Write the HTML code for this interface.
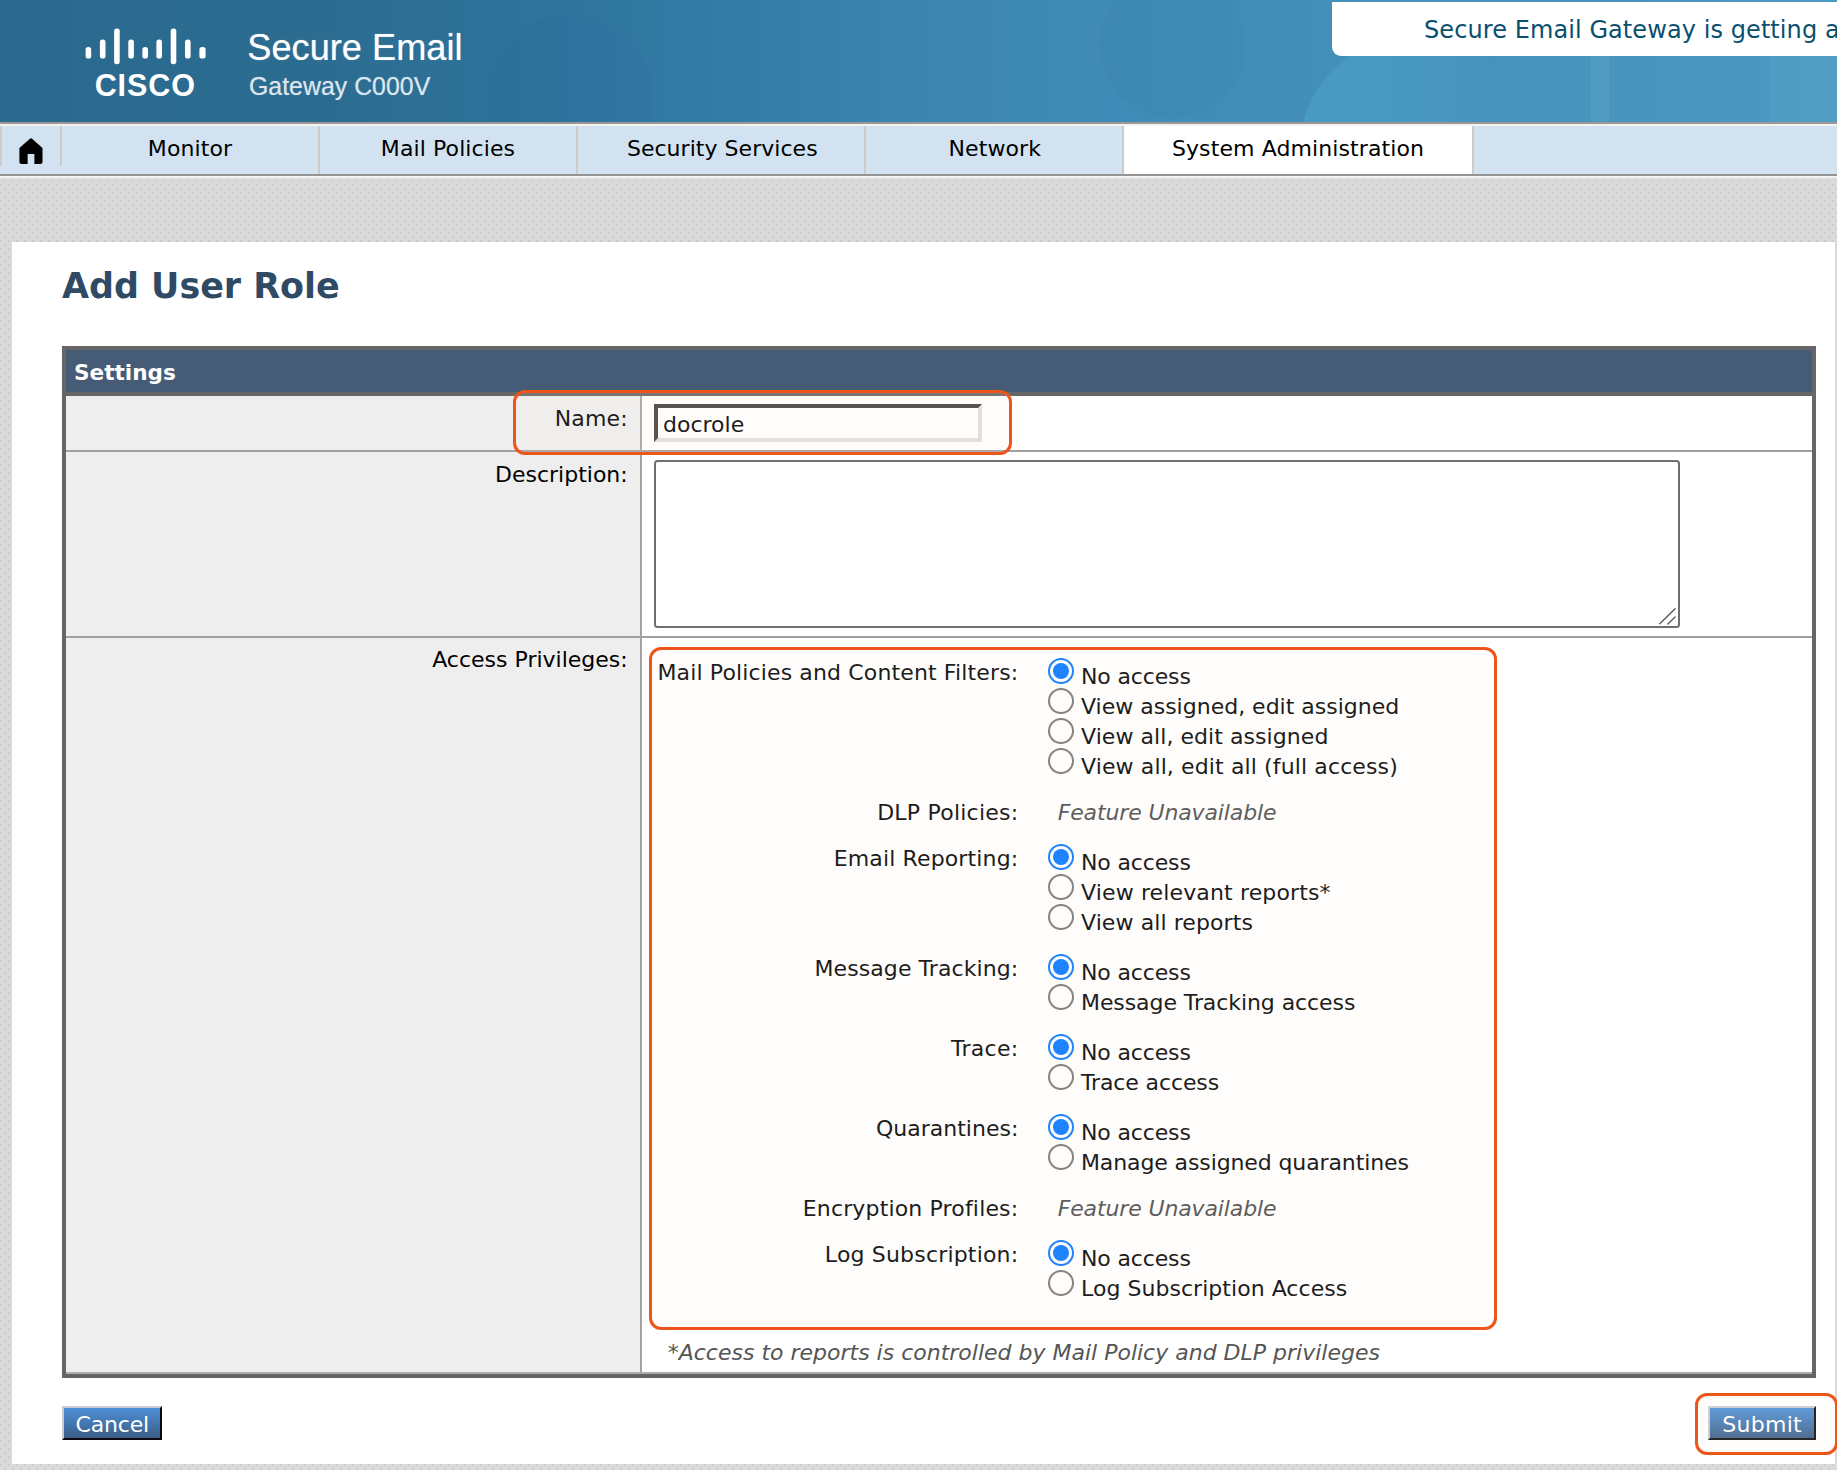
<!DOCTYPE html>
<html lang="en">
<head>
<meta charset="utf-8">
<title>Add User Role</title>
<style>
html,body{margin:0;padding:0;}
body{
  width:1837px;height:1470px;overflow:hidden;position:relative;
  font-family:"DejaVu Sans","Liberation Sans",sans-serif;font-size:22px;color:#000;
  background-color:#dadada;
  background-image:
    radial-gradient(circle at 1px 1px,#cdcdcd 0,#cdcdcd 0.9px,rgba(205,205,205,0) 1.5px),
    radial-gradient(circle at 1px 1px,#cdcdcd 0,#cdcdcd 0.9px,rgba(205,205,205,0) 1.5px);
  background-size:8px 8px,8px 8px;
  background-position:4px 4px,0px 0px;
}
.abs{position:absolute;}
/* ---------- header ---------- */
#hdr{left:0;top:0;width:1837px;height:122px;overflow:hidden;
  background:linear-gradient(90deg,#2b6a8e 0px,#2c6c91 330px,#2f769f 600px,#3b84b0 900px,#418db9 1200px,#4693bd 1500px,#4a99c2 1837px);}
#hdr .c1{left:487px;top:15px;width:166px;height:166px;border-radius:50%;background:rgba(20,80,170,0.035);}
#hdr .c2{left:1100px;top:-28px;width:146px;height:146px;border-radius:50%;background:rgba(0,40,100,0.022);}
#hdr .c3{left:1300px;top:37px;width:226px;height:226px;border-radius:50%;background:linear-gradient(90deg,rgba(100,210,245,0.17) 0%,rgba(100,210,245,0.10) 45%,rgba(100,210,245,0) 100%);}
#hdr .c4{left:1591px;top:56px;width:18px;height:66px;background:rgba(255,255,255,0.06);}
#hdr .c5{left:1769px;top:56px;width:68px;height:66px;background:rgba(255,255,255,0.045);}
#hdrline{left:0;top:122px;width:1837px;height:2px;background:#9a9896;}
#hdrline2{left:0;top:124px;width:1837px;height:2px;background:#f4f3f2;}
#logo{left:83.9px;top:26.7px;width:126px;height:40px;}
#cisco{left:94.3px;top:64.5px;width:102px;text-align:center;font-family:"Liberation Sans","DejaVu Sans",sans-serif;font-weight:bold;font-size:30.5px;line-height:40px;letter-spacing:0.95px;transform:scaleY(1.04);transform-origin:50% 78%;color:#fff;white-space:nowrap;}
#prod1{left:247.3px;top:25.4px;font-family:"Liberation Sans","DejaVu Sans",sans-serif;font-size:36.2px;line-height:46px;color:#fff;white-space:nowrap;text-shadow:0 0 1px rgba(255,255,255,0.55);}
#prod2{left:249px;top:70px;font-family:"Liberation Sans","DejaVu Sans",sans-serif;font-size:24.9px;line-height:32px;color:#dbe6ee;white-space:nowrap;text-shadow:0 0 1px rgba(225,235,242,0.5);}
#banner{left:1332px;top:2px;width:520px;height:54px;background:#fff;border-radius:0 0 0 9px;}
#banner span{position:absolute;left:92px;top:13px;letter-spacing:0.08px;font-size:24px;line-height:30px;color:#0b4f6f;white-space:nowrap;}
/* ---------- nav ---------- */
#nav{left:0;top:126px;width:1837px;height:48px;background:#d2e2f0;}
#navline{left:0;top:174px;width:1837px;height:2px;background:#949494;}
#navline2{left:0;top:176px;width:1837px;height:2px;background:#f3f3f3;}
.tab{position:absolute;top:0;height:48px;line-height:45px;text-align:center;font-size:22px;letter-spacing:0.1px;color:#000;border-left:2px solid #cbcbcb;box-sizing:border-box;white-space:nowrap;}
.tab.on{background:#fff;border-right:2px solid #cbcbcb;}
#homeL{left:0;top:126px;width:2px;height:40px;background:#cccccc;}
#homeR{left:60px;top:126px;width:2px;height:40px;background:#cbcbcb;}
/* ---------- page ---------- */
#page{left:12px;top:242px;width:1823px;height:1222px;background:#fff;}
#title{left:62px;top:263px;font-weight:bold;font-size:34.9px;line-height:46px;color:#2f4a65;white-space:nowrap;}
#tbl{left:62px;top:346px;width:1754px;height:1032px;box-sizing:border-box;border:4px solid #666;background:#fff;}
#th{left:0;top:0;width:1746px;height:42px;background:#465b75;border-bottom:4px solid #666;}
#th span{position:absolute;left:8px;top:10px;font-weight:bold;font-size:21.6px;line-height:26px;color:#fff;}
.lab{position:absolute;left:0;width:574px;background:#eee;border-right:2px solid #a3a3a3;}
.lab span{position:absolute;right:12.3px;white-space:nowrap;line-height:26px;}
.hl{position:absolute;left:0;width:1746px;height:2px;background:#a0a0a0;}
#inp{left:654px;top:404px;width:328px;height:38px;box-sizing:border-box;background:#fff;border-style:solid;border-width:4px;border-color:#403f3c #dedddb #dedddb #403f3c;}
#inp span{position:absolute;left:5px;top:4px;line-height:26px;white-space:nowrap;}
#ta{left:654px;top:460px;width:1026px;height:168px;box-sizing:border-box;background:#fff;border:2px solid #6f6f6f;border-radius:3.5px;}
.ob{position:absolute;box-sizing:border-box;border:3.3px solid #ee551a;border-radius:12px;background:rgba(250,238,230,0.12);}
/* privileges */
.pl{position:absolute;right:818.7px;white-space:nowrap;line-height:26px;}
.pr{position:absolute;left:1081px;white-space:nowrap;line-height:26px;}
.fu{position:absolute;left:1057.7px;white-space:nowrap;line-height:26px;font-style:italic;color:#4a4a4a;letter-spacing:-0.13px;}
.rd{position:absolute;left:1048px;width:26px;height:26px;margin-top:-1px;box-sizing:border-box;border-radius:50%;border:2px solid #767676;background:#fff;}
.rd.on{border-color:#0075ff;}
.rd.on:after{content:"";position:absolute;left:3px;top:3px;width:16px;height:16px;border-radius:50%;background:#0075ff;}
#note{left:667.7px;top:1340px;font-style:italic;color:#555;white-space:nowrap;line-height:26px;}
.btn{position:absolute;top:1406px;height:34px;box-sizing:border-box;border-style:solid;border-width:2px;border-color:#c9cad3 #0a0a10 #0a0a10 #c9cad3;color:#fff;font-size:22px;line-height:34px;text-align:center;white-space:nowrap;}
#cancel{left:62px;width:100px;letter-spacing:-0.2px;text-indent:0.5px;background:linear-gradient(180deg,#4e8fd6 0%,#4377b0 50%,#3b5d86 100%);}
#submit{left:1708px;width:108px;letter-spacing:0.28px;text-indent:0.3px;background:linear-gradient(180deg,#4e8fd6 0%,#4377b0 50%,#3b5d86 100%);}
</style>
</head>
<body>
<!-- header -->
<div id="hdr" class="abs">
  <div class="abs c1"></div><div class="abs c2"></div><div class="abs c3"></div><div class="abs c4"></div><div class="abs c5"></div>
</div>
<div id="hdrline" class="abs"></div><div id="hdrline2" class="abs"></div>
<svg id="logo" class="abs" viewBox="0 0 126 40">
  <g fill="#fff">
    <rect x="1.6" y="20" width="5.6" height="11.6" rx="2.6"/>
    <rect x="15.9" y="12.6" width="5.6" height="19" rx="2.6"/>
    <rect x="30.1" y="1.6" width="5.6" height="35.6" rx="2.6"/>
    <rect x="44.3" y="12.6" width="5.6" height="19" rx="2.6"/>
    <rect x="58.4" y="20" width="5.6" height="11.6" rx="2.6"/>
    <rect x="72.4" y="12.6" width="5.6" height="19" rx="2.6"/>
    <rect x="86.7" y="1.6" width="5.6" height="35.6" rx="2.6"/>
    <rect x="101" y="12.6" width="5.6" height="19" rx="2.6"/>
    <rect x="115.4" y="20" width="6.2" height="11.6" rx="2.6"/>
  </g>
</svg>
<div id="cisco" class="abs">CISCO</div>
<div id="prod1" class="abs">Secure Email</div>
<div id="prod2" class="abs">Gateway C000V</div>
<div id="banner" class="abs"><span>Secure Email Gateway is getting a new look</span></div>

<!-- nav -->
<div id="nav" class="abs">
  <div class="tab" style="left:62px;width:256px;border-left:none;">Monitor</div>
  <div class="tab" style="left:318px;width:258px;">Mail Policies</div>
  <div class="tab" style="left:576px;width:288px;letter-spacing:0.04px;padding-left:2.6px;">Security Services</div>
  <div class="tab" style="left:864px;width:258px;padding-left:1.6px;">Network</div>
  <div class="tab on" style="left:1122px;width:352px;">System Administration</div>
</div>
<div id="homeL" class="abs"></div><div id="homeR" class="abs"></div>
<svg class="abs" style="left:18px;top:137px;width:26px;height:28px" viewBox="0 0 26 28">
  <path d="M11.9 1.7 Q13 0.6 14.1 1.7 L24.5 11.1 L24.5 25 Q24.5 27 22.5 27 L16.4 27 L16.4 16.9 L9.65 16.9 L9.65 27 L3.4 27 Q1.4 27 1.4 25 L1.4 11.1 Z" fill="#000"/>
</svg>
<div id="navline" class="abs"></div><div id="navline2" class="abs"></div>

<!-- page -->
<div id="page" class="abs"></div>
<div id="title" class="abs">Add User Role</div>

<div id="tbl" class="abs">
  <div id="th" class="abs"><span>Settings</span></div>
  <div class="lab" style="top:46px;height:54px;"><span style="top:9.5px;letter-spacing:0.12px;">Name:</span></div>
  <div class="hl" style="top:100px;"></div>
  <div class="lab" style="top:102px;height:184px;"><span style="top:9.5px;">Description:</span></div>
  <div class="hl" style="top:286px;"></div>
  <div class="lab" style="top:288px;height:734px;"><span style="top:9px;">Access Privileges:</span></div>
  <div class="hl" style="top:1022px;background:#adadad;"></div>
</div>

<div id="inp" class="abs"><span>docrole</span></div>
<div id="ta" class="abs">
  <svg class="abs" style="right:0px;bottom:0px;width:20px;height:20px" viewBox="0 0 20 20">
    <path d="M1.8 17.7 L17.1 2.8 M9.8 18 L17.1 11" stroke="#555" stroke-width="1.3" fill="none" stroke-linecap="round"/>
  </svg>
</div>

<!-- privileges -->
<div id="priv" class="abs" style="left:0;top:0;width:1837px;height:0;">
  <div class="pl" style="top:660px;letter-spacing:0.136px;">Mail Policies and Content Filters:</div>
  <div class="rd on" style="top:659px;"></div><div class="pr" style="top:664px;letter-spacing:-0.15px;">No access</div>
  <div class="rd" style="top:689px;"></div><div class="pr" style="top:694px;">View assigned, edit assigned</div>
  <div class="rd" style="top:719px;"></div><div class="pr" style="top:724px;letter-spacing:0.06px;">View all, edit assigned</div>
  <div class="rd" style="top:749px;"></div><div class="pr" style="top:754px;letter-spacing:0.12px;">View all, edit all (full access)</div>

  <div class="pl" style="top:800px;letter-spacing:0.22px;">DLP Policies:</div>
  <div class="fu" style="top:800px;">Feature Unavailable</div>

  <div class="pl" style="top:846px;letter-spacing:0.14px;">Email Reporting:</div>
  <div class="rd on" style="top:845px;"></div><div class="pr" style="top:850px;letter-spacing:-0.15px;">No access</div>
  <div class="rd" style="top:875px;"></div><div class="pr" style="top:880px;letter-spacing:0.14px;">View relevant reports*</div>
  <div class="rd" style="top:905px;"></div><div class="pr" style="top:910px;letter-spacing:0.087px;">View all reports</div>

  <div class="pl" style="top:956px;letter-spacing:0.08px;">Message Tracking:</div>
  <div class="rd on" style="top:955px;"></div><div class="pr" style="top:960px;letter-spacing:-0.15px;">No access</div>
  <div class="rd" style="top:985px;"></div><div class="pr" style="top:990px;letter-spacing:-0.08px;">Message Tracking access</div>

  <div class="pl" style="top:1036px;letter-spacing:0.24px;">Trace:</div>
  <div class="rd on" style="top:1035px;"></div><div class="pr" style="top:1040px;letter-spacing:-0.15px;">No access</div>
  <div class="rd" style="top:1065px;"></div><div class="pr" style="top:1070px;letter-spacing:-0.127px;">Trace access</div>

  <div class="pl" style="top:1116px;">Quarantines:</div>
  <div class="rd on" style="top:1115px;"></div><div class="pr" style="top:1120px;letter-spacing:-0.15px;">No access</div>
  <div class="rd" style="top:1145px;"></div><div class="pr" style="top:1150px;letter-spacing:-0.115px;">Manage assigned quarantines</div>

  <div class="pl" style="top:1196px;letter-spacing:0.16px;">Encryption Profiles:</div>
  <div class="fu" style="top:1196px;">Feature Unavailable</div>

  <div class="pl" style="top:1242px;letter-spacing:0.18px;">Log Subscription:</div>
  <div class="rd on" style="top:1241px;"></div><div class="pr" style="top:1246px;letter-spacing:-0.15px;">No access</div>
  <div class="rd" style="top:1271px;"></div><div class="pr" style="top:1276px;letter-spacing:0.04px;">Log Subscription Access</div>
</div>
<div id="note" class="abs">*Access to reports is controlled by Mail Policy and DLP privileges</div>

<!-- buttons -->
<div id="cancel" class="btn">Cancel</div>
<div id="submit" class="btn">Submit</div>

<!-- orange highlight boxes -->
<div class="ob" style="left:513.3px;top:390px;width:498.5px;height:65px;"></div>
<div class="ob" style="left:649px;top:647px;width:848px;height:683px;"></div>
<div class="ob" style="left:1695px;top:1393px;width:143px;height:62px;"></div>
</body>
</html>
